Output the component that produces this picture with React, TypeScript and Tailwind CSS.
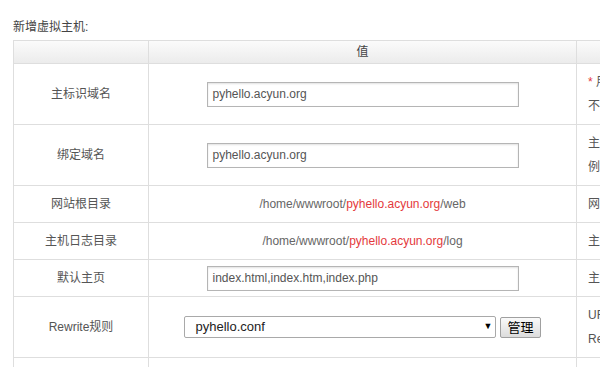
import { ReactNode } from 'react';

const font = { fontFamily: '"Liberation Sans", Arial, "Noto Sans CJK SC", sans-serif' };

function TextInput({ value }: { value: string }) {
  return (
    <div className="inline-flex items-center w-[312px] h-[25px] border border-[#b5b5b5] bg-white shadow-[inset_0_1px_2px_rgba(0,0,0,0.12)] px-[5px] text-[12px] text-[#555] text-left">
      {value}
    </div>
  );
}

function Path({ tail }: { tail: string }) {
  return (
    <span className="text-[#666]">
      /home/wwwroot/<span className="text-[#e4393c]">pyhello.acyun.org</span>/{tail}
    </span>
  );
}

function Row({ label, value, note, h }: { label: string; value: ReactNode; note: ReactNode; h: string }) {
  return (
    <tr className={h}>
      <td className="border border-[#dedede] text-center align-middle text-[#555]">{label}</td>
      <td className="border border-[#dedede] text-center align-middle">{value}</td>
      <td className="border border-[#dedede] align-middle pl-[11px] leading-[24px] text-[#555]">{note}</td>
    </tr>
  );
}

export default function App() {
  return (
    <div className="w-[600px] h-[367px] overflow-hidden bg-white text-[12px]" style={font}>
      <div className="pl-[13px] pt-[20px]">
        <div className="text-[#444] leading-[14px] mb-[6px]">新增虚拟主机:</div>
        <table className="w-[900px] table-fixed border-collapse">
          <colgroup>
            <col className="w-[135px]" />
            <col className="w-[428px]" />
            <col />
          </colgroup>
          <thead>
            <tr className="h-[23px] bg-gradient-to-b from-[#fbfbfb] to-[#ebebeb]">
              <th className="border border-[#dedede] font-normal" />
              <th className="border border-[#dedede] font-normal text-[#444] text-center">值</th>
              <th className="border border-[#dedede] font-normal" />
            </tr>
          </thead>
          <tbody>
            <Row
              h="h-[61px]"
              label="主标识域名"
              value={<TextInput value="pyhello.acyun.org" />}
              note={
                <>
                  <div><span className="text-[#e4393c]">*</span> 用于标识主机，请确保唯一</div>
                  <div>不可修改</div>
                </>
              }
            />
            <Row
              h="h-[61px]"
              label="绑定域名"
              value={<TextInput value="pyhello.acyun.org" />}
              note={
                <>
                  <div>主机绑定的域名，多个用空格分隔</div>
                  <div>例如 a.com b.com</div>
                </>
              }
            />
            <Row h="h-[37px]" label="网站根目录" value={<Path tail="web" />} note="网站根目录" />
            <Row h="h-[37px]" label="主机日志目录" value={<Path tail="log" />} note="主机日志目录" />
            <Row
              h="h-[37px]"
              label="默认主页"
              value={<TextInput value="index.html,index.htm,index.php" />}
              note="主页文件"
            />
            <Row
              h="h-[61px]"
              label="Rewrite规则"
              value={
                <div className="inline-flex items-center gap-[4px]">
                  <div className="flex items-center justify-between w-[312px] h-[22px] border border-[#a9a9a9] rounded-[2px] bg-white pl-[10px] pr-[3px] text-[13px] text-[#222]">
                    <span>pyhello.conf</span>
                    <span className="text-[9px] text-black">▼</span>
                  </div>
                  <button className="h-[21px] px-[6px] border border-[#a0a0a0] rounded-[2px] bg-gradient-to-b from-[#fafafa] to-[#dcdcdc] text-[13px] text-black leading-none">
                    管理
                  </button>
                </div>
              }
              note={
                <>
                  <div>URL重写规则</div>
                  <div>Rewrite规则</div>
                </>
              }
            />
            <tr className="h-[30px]">
              <td className="border border-[#dedede]" />
              <td className="border border-[#dedede]" />
              <td className="border border-[#dedede]" />
            </tr>
          </tbody>
        </table>
      </div>
    </div>
  );
}
